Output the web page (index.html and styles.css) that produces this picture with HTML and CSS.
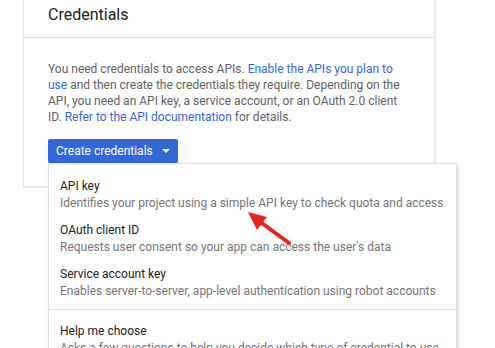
FILE: index.html
```html
<!DOCTYPE html>
<html>
<head>
<meta charset="utf-8">
<link rel="stylesheet" href="styles.css">
</head>
<body>
<div class="page">
  <div class="card">
    <div class="card-header"><h1 class="title">Credentials</h1></div>
    <div class="card-body">
      <p class="intro">You need credentials to access APIs. <a class="link">Enable the APIs you plan to use</a> and then create the credentials they require. Depending on the API, you need an API key, a service account, or an OAuth 2.0 client ID. <a class="link">Refer to the API documentation</a> for details.</p>
      <button class="btn">Create credentials<span class="caret"></span></button>
    </div>
  </div>
  <div class="menu">
    <div class="item">
      <div class="item-title">API key</div>
      <div class="item-desc">Identifies your project using a simple API key to check quota and access</div>
    </div>
    <div class="item">
      <div class="item-title">OAuth client ID</div>
      <div class="item-desc">Requests user consent so your app can access the user's data</div>
    </div>
    <div class="item">
      <div class="item-title">Service account key</div>
      <div class="item-desc">Enables server-to-server, app-level authentication using robot accounts</div>
    </div>
    <div class="divider"></div>
    <div class="item help">
      <div class="item-title">Help me choose</div>
      <div class="item-desc">Asks a few questions to help you decide which type of credential to use</div>
    </div>
  </div>
  <svg class="arrow" width="495" height="348" viewBox="0 0 495 348">
    <line x1="289" y1="243" x2="259" y2="221" stroke="#e8241a" stroke-width="4" stroke-linecap="round"/>
    <polygon points="248,212 267,217 257,230" fill="#e8241a"/>
  </svg>
</div>
</body>
</html>
```
FILE: styles.css
```css
html, body {
  margin: 0;
  padding: 0;
  background: #ffffff;
}
body {
  font-family: Roboto, "Noto Sans", Arial, sans-serif;
  width: 495px;
  height: 348px;
  overflow: hidden;
}
.page {
  position: relative;
  width: 495px;
  height: 348px;
  padding-left: 23px;
  box-sizing: border-box;
}
.card {
  width: 412px;
  box-sizing: border-box;
  border: 1px solid #e3e3e3;
  border-top: none;
  box-shadow: 1px 1px 2px rgba(0,0,0,0.08);
  background: #fff;
}
.card-header {
  height: 38px;
  box-sizing: border-box;
  border-bottom: 1px solid #dadada;
  padding: 4px 24px 0;
}
.title {
  margin: 0;
  font-weight: 400;
  font-size: 16px;
  line-height: 22px;
  color: #212121;
}
.card-body {
  padding: 23px 24px 23px;
}
.intro {
  margin: 0 0 14px;
  font-size: 12px;
  line-height: 16px;
  color: #616161;
}
.link {
  color: #3367d6;
  text-decoration: none;
}
.btn {
  display: flex;
  align-items: center;
  height: 24px;
  padding: 0 8px 0 8px;
  border: none;
  border-radius: 2px;
  background: #3367d6;
  color: #fff;
  font-family: Roboto, "Noto Sans", Arial, sans-serif;
  font-size: 12px;
  line-height: 24px;
  box-shadow: 0 1px 1px rgba(0,0,0,0.2);
}
.caret {
  width: 0;
  height: 0;
  margin-left: 9px;
  border-left: 4px solid transparent;
  border-right: 4px solid transparent;
  border-top: 4px solid #fff;
}
.menu {
  position: absolute;
  left: 48px;
  top: 163px;
  width: 409px;
  height: 200px;
  box-sizing: border-box;
  padding-top: 9px;
  background: #fff;
  border: 1px solid #dedede;
  box-shadow: 2px 2px 4px rgba(0,0,0,0.12);
}
.item {
  padding: 4px 11px 5px;
}
.item-title {
  font-size: 12px;
  line-height: 18px;
  color: #212121;
}
.item-desc {
  font-size: 12px;
  line-height: 17px;
  color: #757575;
  white-space: nowrap;
}
.divider {
  margin-top: 4px;
  height: 1px;
  background: #e0e0e0;
}
.help {
  padding-top: 12px;
}
.arrow {
  position: absolute;
  left: 0;
  top: 0;
}
```
